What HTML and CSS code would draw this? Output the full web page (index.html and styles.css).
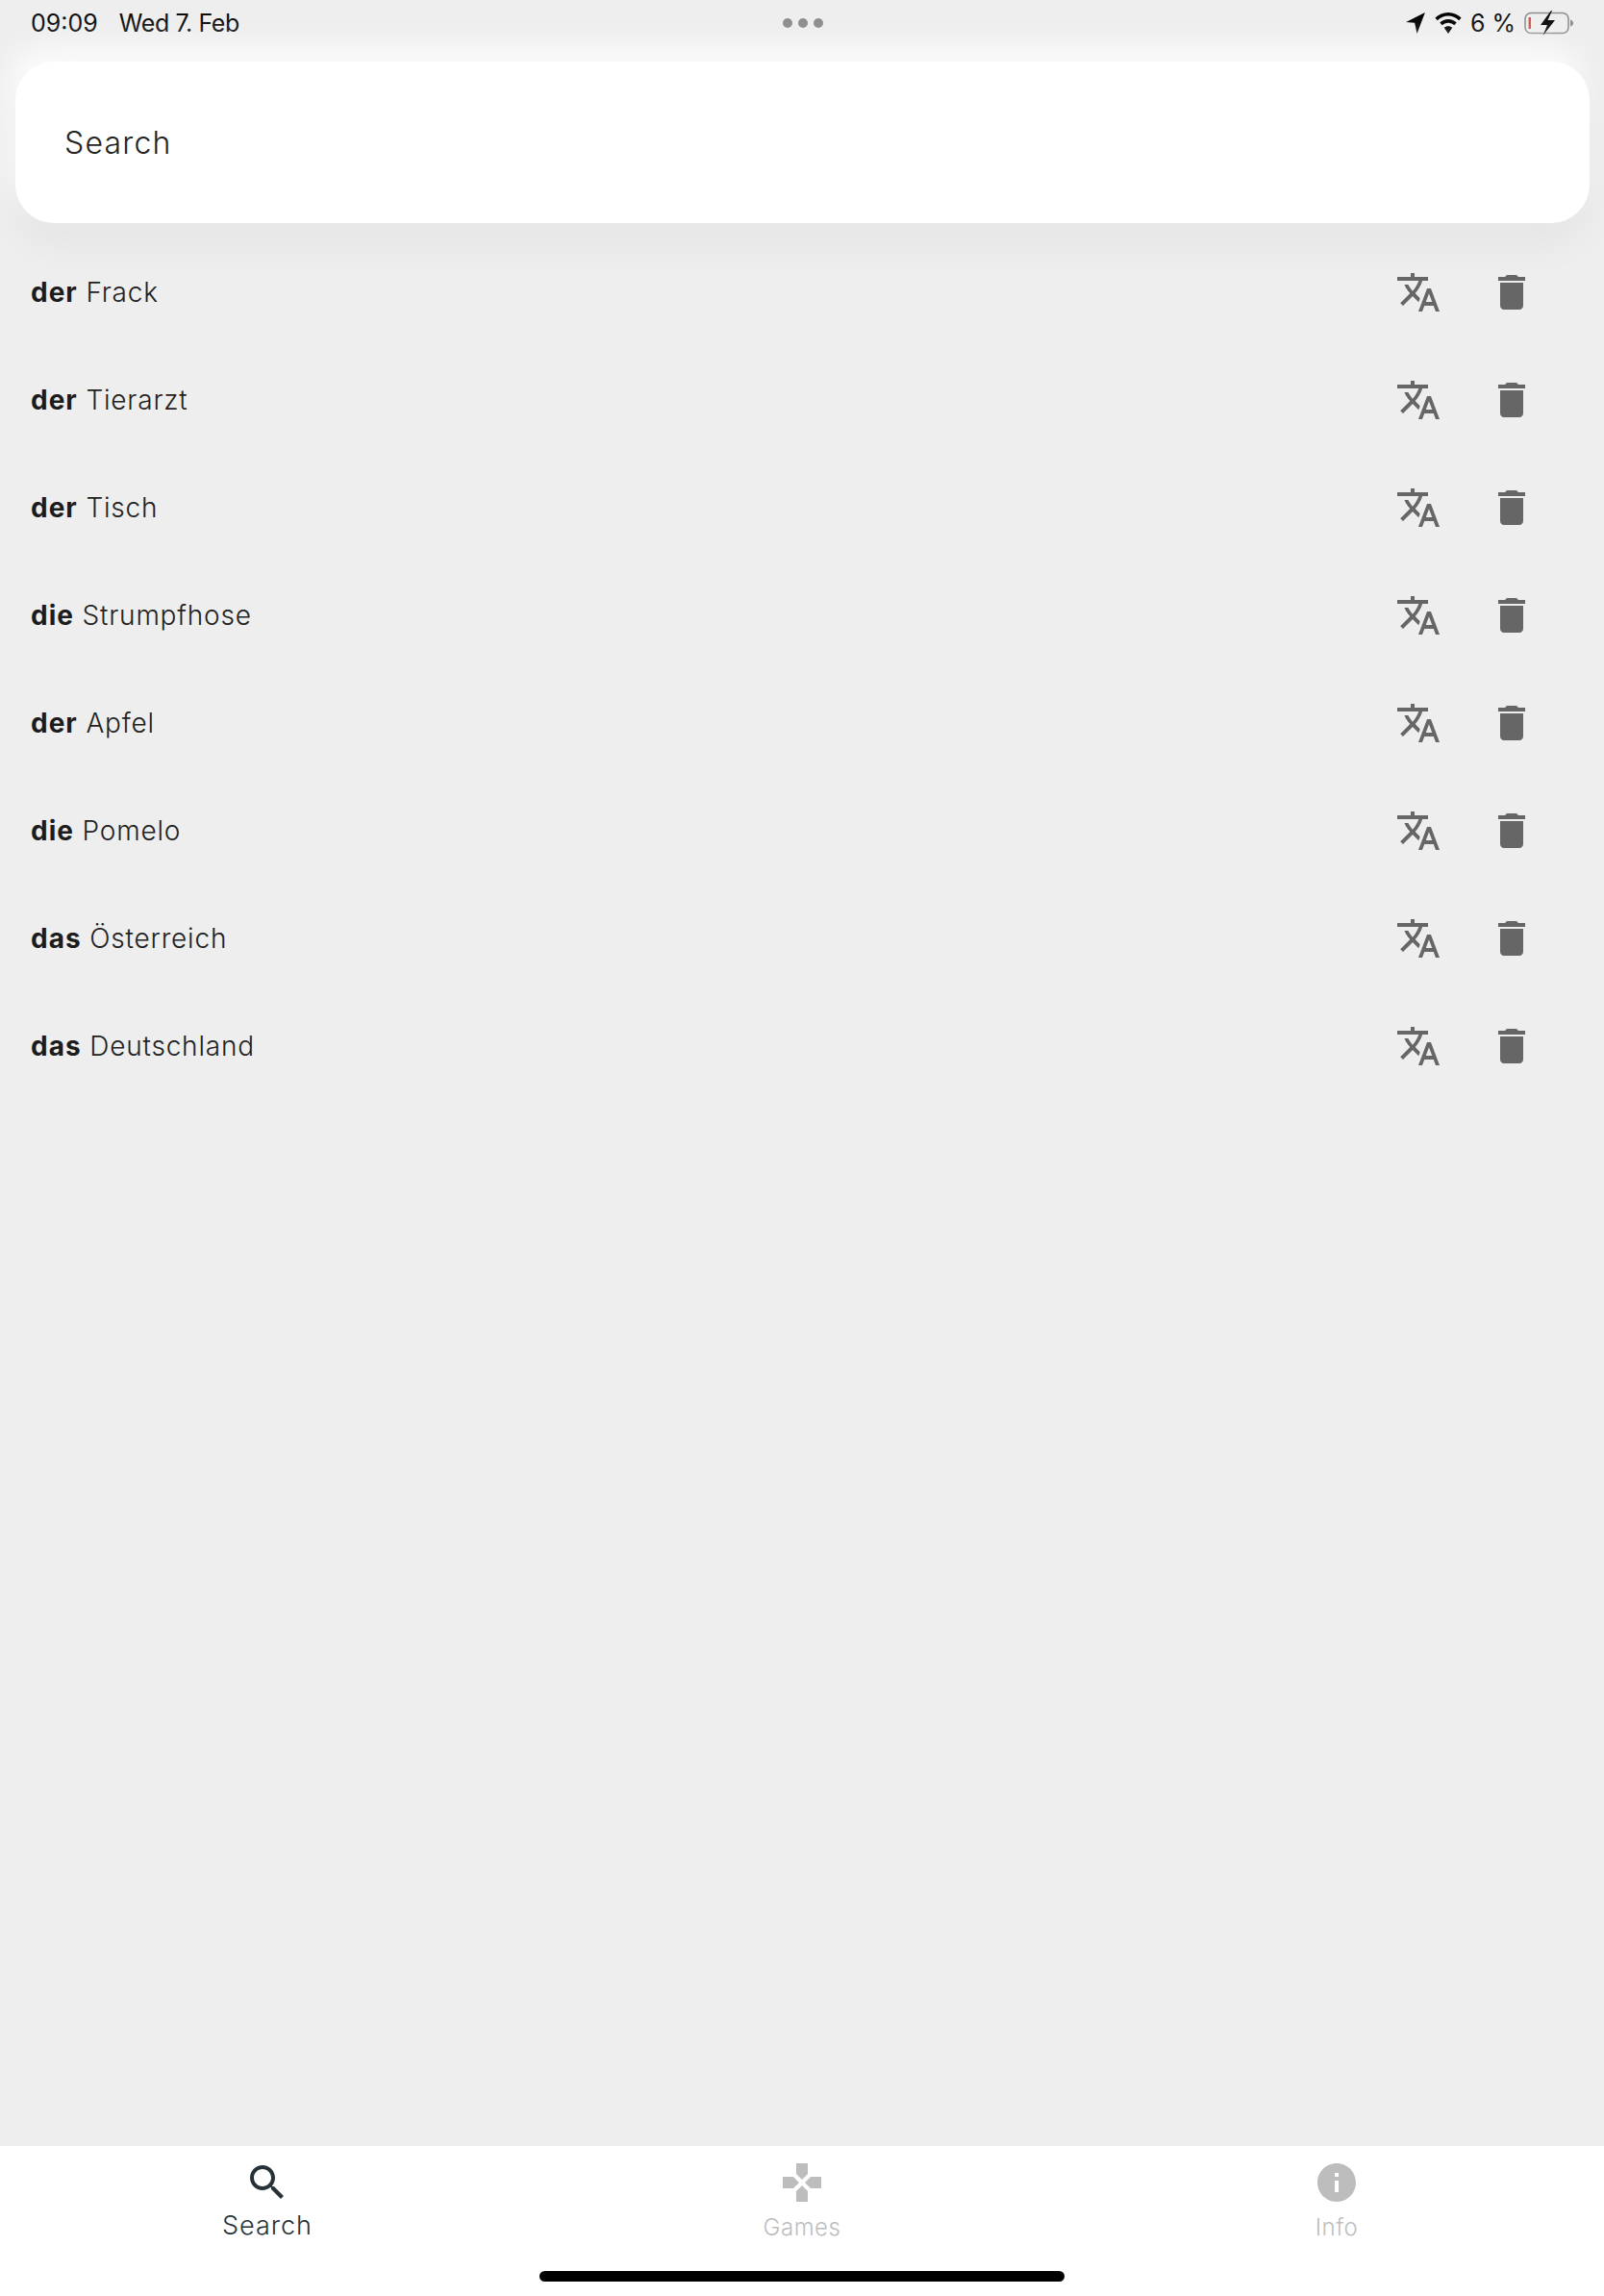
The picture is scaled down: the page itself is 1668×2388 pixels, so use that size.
FILE: index.html
```html
<!DOCTYPE html>
<html lang="en">
<head>
    <meta charset="UTF-8">
    <meta name="viewport" content="width=device-width, initial-scale=1.0">
    <title>Wortschatz</title>
    <link rel="stylesheet" href="styles.css">
</head>
<body>
    <svg class="icon-defs" aria-hidden="true">
        <symbol id="icon-translate" viewBox="0 0 24 24">
            <path d="M12.87 15.07l-2.54-2.51.03-.03c1.74-1.94 2.98-4.17 3.71-6.53H17V4h-7V2H8v2H1v1.99h11.17C11.5 7.92 10.44 9.75 9 11.35 8.07 10.32 7.3 9.19 6.69 8h-2c.73 1.63 1.73 3.17 2.98 4.56l-5.09 5.02L4 19l5-5 3.11 3.11.76-2.04zM18.5 10h-2L12 22h2l1.12-3h4.75L21 22h2l-4.5-12zm-2.62 7l1.62-4.33L19.12 17h-3.24z"/>
        </symbol>
        <symbol id="icon-delete" viewBox="0 0 24 24">
            <path d="M6 19c0 1.1.9 2 2 2h8c1.1 0 2-.9 2-2V7H6v12zM19 4h-3.5l-1-1h-5l-1 1H5v2h14V4z"/>
        </symbol>
    </svg>

    <div class="app">
        <!-- Status bar -->
        <div class="status-bar">
            <div class="status-left">
                <span>09:09</span>
                <span class="status-date">Wed 7. Feb</span>
            </div>
            <div class="status-dots">
                <span></span><span></span><span></span>
            </div>
            <div class="status-right">
                <svg class="status-arrow" viewBox="0 0 18 20"><path d="M18 0L0 9.2l8.2.6L10.4 20z"/></svg>
                <svg class="status-wifi" viewBox="0 0 26 21">
                    <path d="M13 0C8 0 3.500 2 0 5.300l2.300 2.500C5.200 5 9 3.400 13 3.400s7.800 1.600 10.700 4.400L26 5.300C22.500 2 18 0 13 0z"/>
                    <path d="M13 6.800c-3.200 0-6.100 1.300-8.300 3.300L7 12.600c1.600-1.500 3.700-2.400 6-2.400s4.400.9 6 2.400l2.300-2.500c-2.200-2-5.100-3.300-8.300-3.300z"/>
                    <path d="M13 13.500c-1.600 0-3 .6-4.100 1.600L13 21l4.100-5.900c-1.100-1-2.500-1.600-4.100-1.600z"/>
                </svg>
                <span class="status-percent">6 %</span>
                <svg class="status-battery" viewBox="0 0 52 28">
                    <rect x="1" y="3.500" width="45" height="21" rx="6" fill="none" stroke="#8e8e8e" stroke-width="1.600"/>
                    <rect x="4.500" y="8" width="2.500" height="12" fill="#d9534f"/>
                    <path d="M48 10.500c2 .5 3 2 3 3.500s-1 3-3 3.500z" fill="#8e8e8e"/>
                    <path d="M28 1L17 16h7l-4.500 11L32 11h-7.500L29 1z" fill="#0a0a0a"/>
                </svg>
            </div>
        </div>

        <!-- Search -->
        <div class="search-box">Search</div>

        <!-- Word list -->
        <div class="word-list">
            <div class="word-row">
                <div class="word"><b>der</b> Frack</div>
                <svg class="row-icon"><use href="#icon-translate"/></svg>
                <svg class="row-icon"><use href="#icon-delete"/></svg>
            </div>
            <div class="word-row">
                <div class="word"><b>der</b> Tierarzt</div>
                <svg class="row-icon"><use href="#icon-translate"/></svg>
                <svg class="row-icon"><use href="#icon-delete"/></svg>
            </div>
            <div class="word-row">
                <div class="word"><b>der</b> Tisch</div>
                <svg class="row-icon"><use href="#icon-translate"/></svg>
                <svg class="row-icon"><use href="#icon-delete"/></svg>
            </div>
            <div class="word-row">
                <div class="word"><b>die</b> Strumpfhose</div>
                <svg class="row-icon"><use href="#icon-translate"/></svg>
                <svg class="row-icon"><use href="#icon-delete"/></svg>
            </div>
            <div class="word-row">
                <div class="word"><b>der</b> Apfel</div>
                <svg class="row-icon"><use href="#icon-translate"/></svg>
                <svg class="row-icon"><use href="#icon-delete"/></svg>
            </div>
            <div class="word-row">
                <div class="word"><b>die</b> Pomelo</div>
                <svg class="row-icon"><use href="#icon-translate"/></svg>
                <svg class="row-icon"><use href="#icon-delete"/></svg>
            </div>
            <div class="word-row">
                <div class="word"><b>das</b> Österreich</div>
                <svg class="row-icon"><use href="#icon-translate"/></svg>
                <svg class="row-icon"><use href="#icon-delete"/></svg>
            </div>
            <div class="word-row">
                <div class="word"><b>das</b> Deutschland</div>
                <svg class="row-icon"><use href="#icon-translate"/></svg>
                <svg class="row-icon"><use href="#icon-delete"/></svg>
            </div>
        </div>

        <!-- Bottom navigation -->
        <div class="bottom-bar">
            <div class="tabs">
                <div class="tab active">
                    <svg class="tab-icon" viewBox="0 0 24 24"><path d="M15.5 14h-.79l-.28-.27C15.41 12.59 16 11.11 16 9.5 16 5.910 13.090 3 9.500 3S3 5.910 3 9.500 5.910 16 9.500 16c1.610 0 3.090-.59 4.230-1.570l.27.28v.79l5 4.990L20.490 19l-4.990-5zm-6 0C7.010 14 5 11.990 5 9.500S7.010 5 9.500 5 14 7.010 14 9.500 11.990 14 9.500 14z"/></svg>
                    <span>Search</span>
                </div>
                <div class="tab">
                    <svg class="tab-icon" viewBox="0 0 24 24"><path d="M15 7.500V2H9v5.500l3 3 3-3zM7.500 9H2v6h5.500l3-3-3-3zM9 16.500V22h6v-5.500l-3-3-3 3zM16.500 9l-3 3 3 3H22V9h-5.500z"/></svg>
                    <span>Games</span>
                </div>
                <div class="tab">
                    <svg class="tab-icon" viewBox="0 0 24 24"><path d="M12 2C6.480 2 2 6.480 2 12s4.480 10 10 10 10-4.480 10-10S17.520 2 12 2zm1 15h-2v-6h2v6zm0-8h-2V7h2v2z"/></svg>
                    <span>Info</span>
                </div>
            </div>
            <div class="home-indicator"></div>
        </div>
    </div>
</body>
</html>
```

FILE: styles.css
```css
* {
    box-sizing: border-box;
}
html, body {
    margin: 0;
    padding: 0;
}
body {
    font-family: Inter, "Liberation Sans", sans-serif;
    background-color: #eeeeee;
    color: #222;
    overflow: hidden;
}
.icon-defs {
    display: none;
}
.app {
    display: flex;
    flex-direction: column;
    width: 1668px;
    height: 2388px;
}

/* Status bar */
.status-bar {
    display: flex;
    align-items: center;
    justify-content: space-between;
    height: 64px;
    padding: 0 31px 16px 32px;
    color: #0a0a0a;
    font-size: 25px;
    flex-shrink: 0;
}
.status-left {
    display: flex;
    gap: 22px;
    width: 400px;
}
.status-date {
    letter-spacing: -0.400px;
}
.status-dots {
    display: flex;
    gap: 6px;
}
.status-dots span {
    width: 10px;
    height: 10px;
    border-radius: 50%;
    background: #8a8a8a;
}
.status-right {
    display: flex;
    align-items: center;
    justify-content: flex-end;
    width: 400px;
}
.status-arrow {
    width: 20px;
    height: 22px;
    margin-right: 10px;
}
.status-wifi {
    width: 28px;
    height: 22px;
    margin-right: 9px;
}
.status-percent {
    margin-right: 9px;
}
.status-battery {
    width: 52px;
    height: 28px;
}

/* Search */
.search-box {
    display: flex;
    align-items: center;
    height: 168px;
    margin: 0 15px 0 16px;
    padding-left: 51px;
    background: #fff;
    border-radius: 40px;
    font-size: 32px;
    font-weight: 300;
    letter-spacing: 1.200px;
    color: #222;
    box-shadow: 0 24px 40px rgba(0, 0, 0, 0.04), -8px -16px 32px rgba(255, 255, 255, 0.8);
    flex-shrink: 0;
}

/* Word list */
.word-list {
    flex: 1;
    padding-top: 16px;
}
.word-row {
    display: flex;
    align-items: center;
    gap: 49px;
    height: 112px;
    padding: 0 72px 0 32px;
}
.word {
    flex: 1;
    font-size: 28px;
    font-weight: 300;
    letter-spacing: 0.800px;
    color: #222;
}
.word b {
    font-weight: 700;
    letter-spacing: 1px;
    color: #1c1c1c;
}
.row-icon {
    width: 48px;
    height: 48px;
    fill: #666;
}

/* Bottom navigation */
.bottom-bar {
    display: flex;
    flex-direction: column;
    height: 156px;
    background: #fff;
    flex-shrink: 0;
}
.tabs {
    display: grid;
    grid-template-columns: repeat(3, 1fr);
    height: 130px;
}
.tab {
    display: flex;
    flex-direction: column;
    align-items: center;
    padding-top: 14px;
    font-size: 24px;
    font-weight: 300;
    letter-spacing: 0.500px;
    line-height: 32px;
    color: #bdbdbd;
}
.tab-icon {
    width: 48px;
    height: 48px;
    margin-bottom: 7px;
    fill: #bdbdbd;
}
.tab.active {
    font-size: 27px;
    letter-spacing: 1px;
    color: #263238;
}
.tab.active .tab-icon {
    margin-bottom: 5px;
    fill: #263238;
}
.home-indicator {
    align-self: center;
    width: 546px;
    height: 11px;
    border-radius: 6px;
    background: #000;
}
```
